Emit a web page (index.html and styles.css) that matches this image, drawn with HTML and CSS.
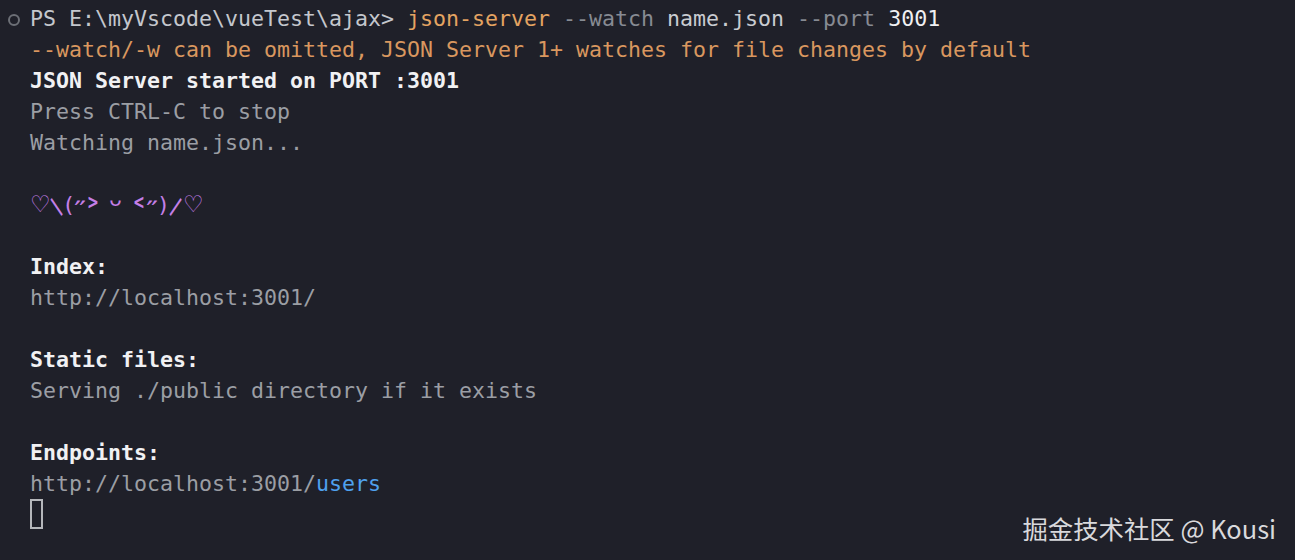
FILE: index.html
```html
<!DOCTYPE html>
<html lang="zh">
<head>
<meta charset="utf-8">
<title>Terminal</title>
<link rel="stylesheet" href="styles.css">
</head>
<body>
<div class="term">
  <div class="gutter"><span class="status-dot"></span></div>
  <div class="output">
    <div class="line"><span class="path">PS E:\myVscode\vueTest\ajax&gt; </span><span class="cmd">json-server</span> <span class="flag">--watch</span> <span class="arg">name.json</span> <span class="flag">--port</span> <span class="num">3001</span></div>
    <div class="line warn">--watch/-w can be omitted, JSON Server 1+ watches for file changes by default</div>
    <div class="line strong">JSON Server started on PORT :3001</div>
    <div class="line">Press CTRL-C to stop</div>
    <div class="line">Watching name.json...</div>
    <div class="line"></div>
    <div class="line kao"><span class="c heart">♡</span><span class="c arm">⸜</span><span class="c par">(</span><span class="c blush">˶</span><span class="c eye">˃</span><span class="c sp"> </span><span class="c mouth">ᵕ</span><span class="c sp"> </span><span class="c eye">˂</span><span class="c blush">˶</span><span class="c par">)</span><span class="c arm">⸝</span><span class="c heart">♡</span></div>
    <div class="line"></div>
    <div class="line strong">Index:</div>
    <div class="line">http://localhost:3001/</div>
    <div class="line"></div>
    <div class="line strong">Static files:</div>
    <div class="line">Serving ./public directory if it exists</div>
    <div class="line"></div>
    <div class="line strong">Endpoints:</div>
    <div class="line">http://localhost:3001/<span class="link">users</span></div>
    <div class="line"><span class="cursor"></span></div>
  </div>
</div>
<div class="watermark">掘金技术社区 @ Kousi</div>
</body>
</html>
```

FILE: styles.css
```css
html, body {
  margin: 0;
  padding: 0;
  width: 1295px;
  height: 560px;
  overflow: hidden;
  background: #1f2029;
}
body {
  position: relative;
  font-family: "DejaVu Sans Mono", "Liberation Mono", monospace;
  font-size: 21.6px;
  color: #9b9ea4;
}
.term {
  display: grid;
  grid-template-columns: 30px 1fr;
  padding-top: 3px;
}
.gutter {
  display: flex;
  justify-content: flex-start;
  padding-left: 8px;
  padding-top: 11px;
}
.status-dot {
  width: 8px;
  height: 8px;
  border: 2.5px solid #6c6f76;
  border-radius: 50%;
}
.line {
  height: 31px;
  line-height: 31px;
  white-space: pre;
}
.path { color: #c4c7cd; }
.cmd { color: #e4a462; }
.flag { color: #878b93; }
.arg { color: #c9ccd1; }
.num { color: #f0f0f2; }
.warn { color: #d9975f; }
.strong { color: #f1f1f3; font-weight: bold; }
.kao {
  display: flex;
  color: #c47fe6;
  font-family: "DejaVu Sans", "Noto Sans", sans-serif;
  font-size: 21.6px;
}
.kao .c {
  display: block;
  height: 31px;
  line-height: 31px;
  text-align: center;
}
.kao .heart { width: 19px; font-size: 23px; }
.kao .arm { width: 15px; transform: translateY(-9px) scale(1.5, 2.2); }
.kao .par { width: 10px; font-size: 22px; }
.kao .blush { width: 12px; transform: translateY(-1px) scale(1.3); }
.kao .eye { width: 14px; transform: translateY(11px) scale(1.7); }
.kao .sp { width: 9px; }
.kao .mouth { width: 14px; transform: translateY(1px) scale(1.5); }
.link { color: #4fa1ee; }
.cursor {
  display: inline-block;
  width: 9px;
  height: 26px;
  border: 2px solid #b5b7bb;
  vertical-align: middle;
  margin-top: -4px;
}
.watermark {
  position: absolute;
  right: 19px;
  bottom: 18px;
  font-family: "Noto Sans CJK SC", "Noto Sans", sans-serif;
  font-size: 25.4px;
  color: #d9d9dc;
  line-height: 28px;
}
```
